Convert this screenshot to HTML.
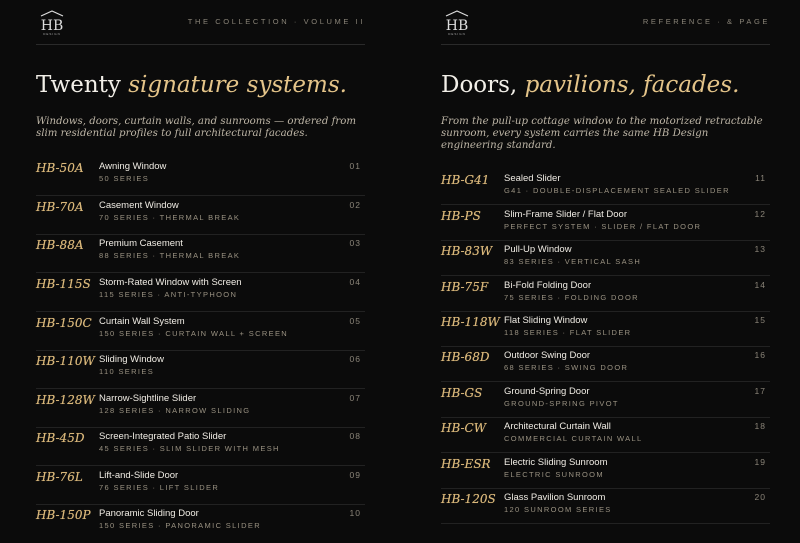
<!DOCTYPE html>
<html><head><meta charset="utf-8"><style>
*{margin:0;padding:0;box-sizing:border-box}
body{width:800px;height:535px;background:#0b0b0b;overflow:hidden;position:relative;font-family:"Liberation Sans",sans-serif}
.col{position:absolute;top:0;width:329px;height:535px}
.logo{position:absolute;top:8px;left:2px;width:28px;height:28px}
.hdr{position:absolute;top:17px;right:0;font-size:7.5px;letter-spacing:2.6px;color:#8a8478}
.rule{position:absolute;top:44px;left:0;right:0;height:1px;background:#2a2a2a}
h1{position:absolute;top:72px;left:0;font-family:"DejaVu Serif",serif;font-weight:normal;font-size:23px;color:#f2efe8;white-space:nowrap}
h1 i{color:#e4c489}
.sub{position:absolute;left:0;font-family:"DejaVu Serif",serif;font-style:italic;font-size:10.2px;line-height:12px;color:#bdb5a6;white-space:nowrap}
.row{position:absolute;left:0;right:0;border-bottom:1px solid #222}
.code{position:absolute;left:0;top:0;font-family:"DejaVu Serif",serif;font-style:italic;font-size:12px;color:#d9b77a;text-shadow:0 0 0.4px #d9b77a}
.nm{position:absolute;left:63px;top:0;font-size:9.5px;color:#f0ece4}
.sr{position:absolute;left:63px;top:13px;font-size:7.5px;letter-spacing:1.35px;color:#9a9282}
.n{position:absolute;right:4px;top:0;font-size:8.5px;letter-spacing:1px;color:#8a8478}
</style></head><body>
<div class="col" style="left:36px">
<svg class="logo" viewBox="0 0 28 28"><path d="M3 8 L14 3 L25 8" fill="none" stroke="#ddd" stroke-width="1.2"/><text x="14" y="22" fill="#ddd" font-family="DejaVu Serif" font-size="14" text-anchor="middle">HB</text><text x="14" y="27" fill="#aaa" font-size="3" text-anchor="middle" letter-spacing="1">DESIGN</text></svg>
<div class="hdr">THE COLLECTION · VOLUME II</div>
<div class="rule"></div>
<h1>Twenty <i>signature systems.</i></h1>
<div class="sub" style="top:116px">Windows, doors, curtain walls, and sunrooms — ordered from<br>slim residential profiles to full architectural facades.</div>
<div class="row" style="top:161px;height:35px"><div class="code">HB-50A</div><div class="nm">Awning Window</div><div class="sr">50 SERIES</div><div class="n">01</div></div>
<div class="row" style="top:200px;height:35px"><div class="code">HB-70A</div><div class="nm">Casement Window</div><div class="sr">70 SERIES · THERMAL BREAK</div><div class="n">02</div></div>
<div class="row" style="top:238px;height:35px"><div class="code">HB-88A</div><div class="nm">Premium Casement</div><div class="sr">88 SERIES · THERMAL BREAK</div><div class="n">03</div></div>
<div class="row" style="top:277px;height:35px"><div class="code">HB-115S</div><div class="nm">Storm-Rated Window with Screen</div><div class="sr">115 SERIES · ANTI-TYPHOON</div><div class="n">04</div></div>
<div class="row" style="top:316px;height:35px"><div class="code">HB-150C</div><div class="nm">Curtain Wall System</div><div class="sr">150 SERIES · CURTAIN WALL + SCREEN</div><div class="n">05</div></div>
<div class="row" style="top:354px;height:35px"><div class="code">HB-110W</div><div class="nm">Sliding Window</div><div class="sr">110 SERIES</div><div class="n">06</div></div>
<div class="row" style="top:393px;height:35px"><div class="code">HB-128W</div><div class="nm">Narrow-Sightline Slider</div><div class="sr">128 SERIES · NARROW SLIDING</div><div class="n">07</div></div>
<div class="row" style="top:431px;height:35px"><div class="code">HB-45D</div><div class="nm">Screen-Integrated Patio Slider</div><div class="sr">45 SERIES · SLIM SLIDER WITH MESH</div><div class="n">08</div></div>
<div class="row" style="top:470px;height:35px"><div class="code">HB-76L</div><div class="nm">Lift-and-Slide Door</div><div class="sr">76 SERIES · LIFT SLIDER</div><div class="n">09</div></div>
<div class="row" style="top:508px;height:35px;border:none"><div class="code">HB-150P</div><div class="nm">Panoramic Sliding Door</div><div class="sr">150 SERIES · PANORAMIC SLIDER</div><div class="n">10</div></div>
</div>
<div class="col" style="left:441px">
<svg class="logo" viewBox="0 0 28 28"><path d="M3 8 L14 3 L25 8" fill="none" stroke="#ddd" stroke-width="1.2"/><text x="14" y="22" fill="#ddd" font-family="DejaVu Serif" font-size="14" text-anchor="middle">HB</text><text x="14" y="27" fill="#aaa" font-size="3" text-anchor="middle" letter-spacing="1">DESIGN</text></svg>
<div class="hdr">REFERENCE · &amp; PAGE</div>
<div class="rule"></div>
<h1>Doors, <i>pavilions, facades.</i></h1>
<div class="sub" style="top:116px">From the pull-up cottage window to the motorized retractable<br>sunroom, every system carries the same HB Design<br>engineering standard.</div>
<div class="row" style="top:173px;height:32px"><div class="code">HB-G41</div><div class="nm">Sealed Slider</div><div class="sr">G41 · DOUBLE-DISPLACEMENT SEALED SLIDER</div><div class="n">11</div></div>
<div class="row" style="top:209px;height:32px"><div class="code">HB-PS</div><div class="nm">Slim-Frame Slider / Flat Door</div><div class="sr">PERFECT SYSTEM · SLIDER / FLAT DOOR</div><div class="n">12</div></div>
<div class="row" style="top:244px;height:32px"><div class="code">HB-83W</div><div class="nm">Pull-Up Window</div><div class="sr">83 SERIES · VERTICAL SASH</div><div class="n">13</div></div>
<div class="row" style="top:280px;height:32px"><div class="code">HB-75F</div><div class="nm">Bi-Fold Folding Door</div><div class="sr">75 SERIES · FOLDING DOOR</div><div class="n">14</div></div>
<div class="row" style="top:315px;height:32px"><div class="code">HB-118W</div><div class="nm">Flat Sliding Window</div><div class="sr">118 SERIES · FLAT SLIDER</div><div class="n">15</div></div>
<div class="row" style="top:350px;height:32px"><div class="code">HB-68D</div><div class="nm">Outdoor Swing Door</div><div class="sr">68 SERIES · SWING DOOR</div><div class="n">16</div></div>
<div class="row" style="top:386px;height:32px"><div class="code">HB-GS</div><div class="nm">Ground-Spring Door</div><div class="sr">GROUND-SPRING PIVOT</div><div class="n">17</div></div>
<div class="row" style="top:421px;height:32px"><div class="code">HB-CW</div><div class="nm">Architectural Curtain Wall</div><div class="sr">COMMERCIAL CURTAIN WALL</div><div class="n">18</div></div>
<div class="row" style="top:457px;height:32px"><div class="code">HB-ESR</div><div class="nm">Electric Sliding Sunroom</div><div class="sr">ELECTRIC SUNROOM</div><div class="n">19</div></div>
<div class="row" style="top:492px;height:32px"><div class="code">HB-120S</div><div class="nm">Glass Pavilion Sunroom</div><div class="sr">120 SUNROOM SERIES</div><div class="n">20</div></div>
</div>
</body></html>
